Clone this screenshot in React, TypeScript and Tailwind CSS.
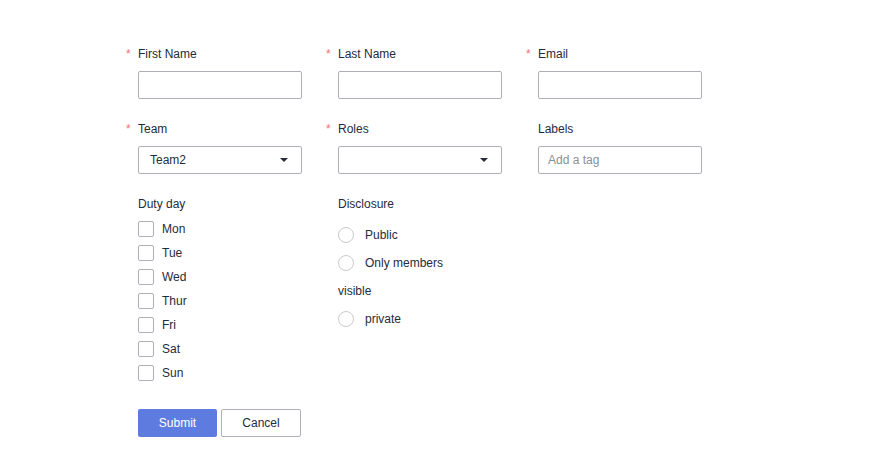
export default function App() {
  const days = ["Mon", "Tue", "Wed", "Thur", "Fri", "Sat", "Sun"];

  const Label = ({ text, required }: { text: string; required?: boolean }) => (
    <div className="flex h-[18px] items-center leading-[18px] text-[#252b3a]">
      {required && <span className="-ml-[12px] w-[12px] text-[#f66f6a]">*</span>}
      <span>{text}</span>
    </div>
  );

  const inputCls =
    "mt-[8px] flex h-[28px] w-[164px] items-center rounded-[2px] border border-[#adb0b8] bg-white px-[11px]";

  const Caret = () => (
    <svg width="8" height="4" viewBox="0 0 8 4" className="ml-auto mr-[2px]">
      <path d="M0 0h8L4 4z" fill="#252b3a" />
    </svg>
  );

  return (
    <div
      className="min-h-[474px] bg-white pl-[138px] pt-[45px] text-[12px] text-[#252b3a]"
      style={{ fontFamily: '"Liberation Sans", Arial, sans-serif' }}
    >
      <div className="grid grid-cols-[200px_200px_200px]">
        <div>
          <Label text="First Name" required />
          <div className={inputCls} />
        </div>
        <div>
          <Label text="Last Name" required />
          <div className={inputCls} />
        </div>
        <div>
          <Label text="Email" required />
          <div className={inputCls} />
        </div>
      </div>

      <div className="mt-[21px] grid grid-cols-[200px_200px_200px]">
        <div>
          <Label text="Team" required />
          <div className={inputCls}>
            <span>Team2</span>
            <Caret />
          </div>
        </div>
        <div>
          <Label text="Roles" required />
          <div className={inputCls}>
            <Caret />
          </div>
        </div>
        <div>
          <Label text="Labels" />
          <div className="mt-[8px] flex h-[28px] w-[164px] items-center rounded-[2px] border border-[#adb0b8] bg-white px-[9px]">
            <span className="text-[#8a8e99]">Add a tag</span>
          </div>
        </div>
      </div>

      <div className="mt-[21px] grid grid-cols-[200px_200px]">
        <div>
          <Label text="Duty day" />
          <div className="mt-[4px] flex flex-col">
            {days.map((d) => (
              <div key={d} className="flex h-[24px] items-center">
                <span className="h-[16px] w-[16px] rounded-[2px] border border-[#adb0b8] bg-white" />
                <span className="ml-[8px]">{d}</span>
              </div>
            ))}
          </div>
        </div>
        <div>
          <Label text="Disclosure" />
          <div className="mt-[8px] flex flex-col">
            <div className="flex h-[28px] items-center">
              <span className="h-[16px] w-[16px] rounded-full border border-[#c8cad0] bg-white" />
              <span className="ml-[11px]">Public</span>
            </div>
            <div className="flex h-[28px] items-center">
              <span className="h-[16px] w-[16px] rounded-full border border-[#c8cad0] bg-white" />
              <span className="ml-[11px]">Only members</span>
            </div>
            <div className="h-[28px] leading-[28px]">visible</div>
            <div className="flex h-[28px] items-center">
              <span className="h-[16px] w-[16px] rounded-full border border-[#c8cad0] bg-white" />
              <span className="ml-[11px]">private</span>
            </div>
          </div>
        </div>
      </div>

      <div className="mt-[24px] flex gap-[4px]">
        <button className="h-[28px] w-[79px] rounded-[2px] bg-[#5e7ce0] text-[12px] text-white">
          Submit
        </button>
        <button className="h-[28px] w-[80px] rounded-[2px] border border-[#adb0b8] bg-white text-[12px] text-[#252b3a]">
          Cancel
        </button>
      </div>
    </div>
  );
}
